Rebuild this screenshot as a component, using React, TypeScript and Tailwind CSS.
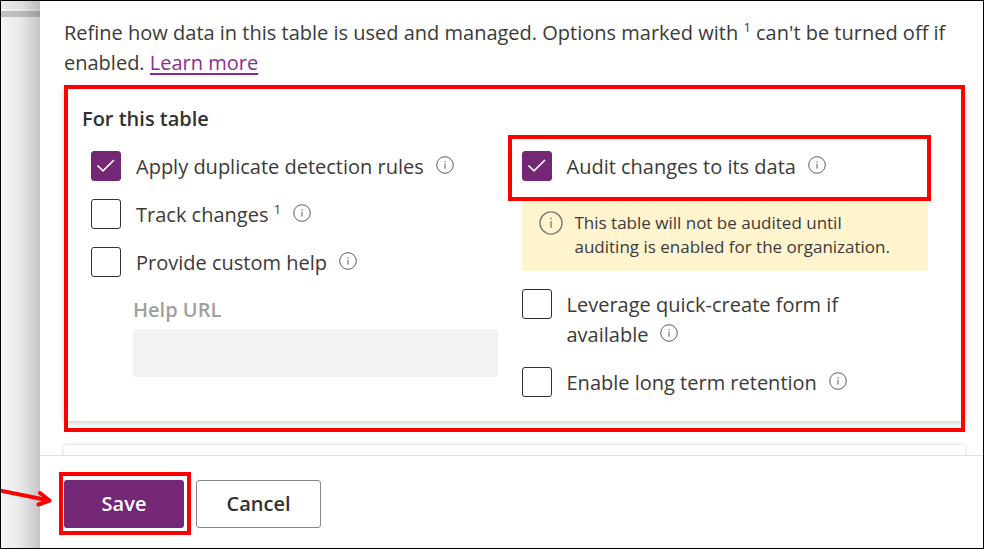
import type { ReactNode } from "react";

function InfoIcon({ large = false }: { large?: boolean }) {
  return (
    <svg
      viewBox="0 0 18 18"
      className={large ? "size-6 shrink-0" : "size-[18px] shrink-0"}
      fill="none"
      stroke="currentColor"
      strokeWidth="1"
      aria-hidden="true"
    >
      <circle cx="9" cy="9" r="8.3" />
      <path d="M9 7.6v5M9 5v1.3" />
    </svg>
  );
}

function InfoButton({ about }: { about: string }) {
  return (
    <button
      type="button"
      aria-label={`More information about ${about}`}
      className="ml-3 inline-block align-baseline text-[#605e5c]"
    >
      <InfoIcon />
    </button>
  );
}

interface OptionProps {
  id: string;
  about: string;
  checked?: boolean;
  children: ReactNode;
}

function Option({ id, about, checked = false, children }: OptionProps) {
  return (
    <div className="flex items-start gap-[15px]">
      <span className="grid size-[30px] shrink-0">
        <input
          id={id}
          type="checkbox"
          defaultChecked={checked}
          className="peer col-start-1 row-start-1 size-[30px] appearance-none rounded-[3px] border border-[#323130] bg-white checked:border-[#742774] checked:bg-[#742774]"
        />
        <svg
          viewBox="0 0 30 30"
          className="pointer-events-none invisible col-start-1 row-start-1 size-[30px] peer-checked:visible"
          fill="none"
          stroke="white"
          strokeWidth="1.6"
          aria-hidden="true"
        >
          <path d="M6.5 14.5l5.5 5.3L23 9" />
        </svg>
      </span>
      <div className="-mb-px pt-px leading-[30px]">
        <label htmlFor={id}>{children}</label>
        <InfoButton about={about} />
      </div>
    </div>
  );
}

function Superscript({ children }: { children: ReactNode }) {
  return <sup className="top-0 align-[8px] text-[13px] leading-none">{children}</sup>;
}

export default function App() {
  return (
    <div className="relative flex h-screen overflow-hidden border border-black bg-white font-['Open_Sans','Segoe_UI',sans-serif] text-[20px] text-[#3b3a39]">
      <div className="relative flex w-[39px] shrink-0 flex-col bg-[#f5f5f5]">
        <div className="h-2 bg-[#edebe9]" />
        <div className="mt-0.5 h-1.5 bg-[#c4c4c4]" />
        <div className="absolute inset-0 bg-linear-to-r from-transparent via-black/5 to-black/20" />
      </div>

      <main className="flex min-w-0 flex-1 flex-col">
        <div className="min-h-0 flex-1 overflow-hidden pt-[17px] pr-[18px] pl-6">
          <p className="leading-[30px]">
            Refine how data in this table is used and managed. Options marked with{" "}
            <Superscript>1</Superscript> can't be turned off if enabled.{" "}
            <a href="#learn-more" className="text-[#8a2d92] underline decoration-2 underline-offset-3">
              Learn more
            </a>
          </p>

          <section className="relative mt-2 rounded px-[18px] pt-[18px] pb-6 shadow-[0_2px_6px_rgba(0,0,0,0.2)]">
            <div className="pointer-events-none absolute -top-px right-0 -bottom-[11px] left-0 border-4 border-[#ff0000]" />
            <h2 className="leading-[30px] font-semibold text-[#323130]">For this table</h2>
            <div className="mt-[17px] grid grid-cols-2 gap-6 pr-[19px] pl-[9px]">
              <div className="flex flex-col gap-[18px]">
                <Option id="duplicates" about="duplicate detection" checked>
                  Apply duplicate detection rules
                </Option>
                <Option id="track" about="tracking changes">
                  Track changes <Superscript>1</Superscript>
                </Option>
                <Option id="help" about="custom help">
                  Provide custom help
                </Option>
                <div className="flex flex-col gap-1 pl-[42px]">
                  <label htmlFor="help-url" className="leading-[30px] font-semibold text-[#a19f9d]">
                    Help URL
                  </label>
                  <input
                    id="help-url"
                    type="url"
                    disabled
                    className="h-12 w-full rounded-[3px] bg-[#f3f2f1] px-3"
                  />
                </div>
              </div>

              <div className="flex flex-col gap-[18px]">
                <div className="relative">
                  <Option id="audit" about="auditing" checked>
                    Audit changes to its data
                  </Option>
                  <div className="pointer-events-none absolute -top-4 -right-[3px] -bottom-5 -left-3.5 z-10 border-4 border-[#ff0000]" />
                </div>
                <div className="flex gap-3 bg-[#fff4ce] py-3 pr-6 pl-[17px]">
                  <span className="text-[#797775]">
                    <InfoIcon large />
                  </span>
                  <p className="text-[17px] leading-6">
                    This table will not be audited until auditing is enabled for the organization.
                  </p>
                </div>
                <div className="pr-12">
                  <Option id="quick-create" about="quick-create forms">
                    Leverage quick-create form if available
                  </Option>
                </div>
                <Option id="retention" about="long term retention">
                  Enable long term retention
                </Option>
              </div>
            </div>
          </section>

          <section className="mt-6 h-24 rounded shadow-[0_0_4px_rgba(0,0,0,0.2)]" />
        </div>

        <footer className="flex gap-3 border-t border-[#e1dfdd] px-6 pt-6 pb-5 leading-[30px] font-semibold">
          <div className="relative">
            <button type="button" className="h-12 w-[120px] rounded-[3px] bg-[#742774] text-white">
              Save
            </button>
            <div className="pointer-events-none absolute -top-2 -right-[7px] -bottom-[7px] -left-[5px] border-4 border-[#ff0000]" />
            <svg
              viewBox="0 0 52 22"
              className="pointer-events-none absolute top-[7px] -left-16 h-[22px] w-[52px]"
              fill="none"
              stroke="#ff0000"
              strokeWidth="4"
              strokeLinecap="round"
              strokeLinejoin="round"
              aria-hidden="true"
            >
              <path d="M0 3.5L49 13.5M40 6L49.5 13.5L38.500 17.500" />
            </svg>
          </div>
          <button type="button" className="h-12 w-[125px] rounded-[3px] border border-[#8a8886] bg-white text-[#323130]">
            Cancel
          </button>
        </footer>
      </main>
    </div>
  );
}
